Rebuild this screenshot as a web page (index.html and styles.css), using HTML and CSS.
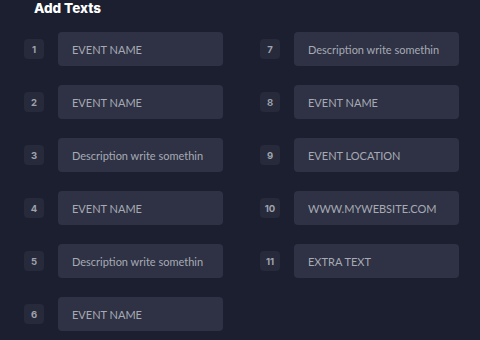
FILE: index.html
```html
<!DOCTYPE html>
<html lang="en">
  <head>
    <meta charset="UTF-8" />
    <meta name="viewport" content="width=device-width, initial-scale=1.0" />
    <title>Add Texts</title>
    <link rel="stylesheet" href="styles.css">
  </head>
  <body>
    <div class="panel">
      <h2 class="title">Add Texts</h2>

      <div class="fields">
        <div class="column">
          <label class="field"><span class="num">1</span><input type="text" placeholder="EVENT NAME" /></label>
          <label class="field"><span class="num">2</span><input type="text" placeholder="EVENT NAME" /></label>
          <label class="field"><span class="num">3</span><input type="text" placeholder="Description write somethin" /></label>
          <label class="field"><span class="num">4</span><input type="text" placeholder="EVENT NAME" /></label>
          <label class="field"><span class="num">5</span><input type="text" placeholder="Description write somethin" /></label>
          <label class="field"><span class="num">6</span><input type="text" placeholder="EVENT NAME" /></label>
        </div>
        <div class="column">
          <label class="field"><span class="num">7</span><input type="text" placeholder="Description write somethin" /></label>
          <label class="field"><span class="num">8</span><input type="text" placeholder="EVENT NAME" /></label>
          <label class="field"><span class="num">9</span><input type="text" placeholder="EVENT LOCATION" /></label>
          <label class="field"><span class="num">10</span><input type="text" placeholder="WWW.MYWEBSITE.COM" /></label>
          <label class="field"><span class="num">11</span><input type="text" placeholder="EXTRA TEXT" /></label>
        </div>
      </div>
    </div>
  </body>
</html>
```

FILE: styles.css
```css
html,
body {
  margin: 0;
  background: #1b1f30;
}
body {
  font-family: Inter, "Noto Sans", sans-serif;
  color: #a4a7b2;
}
.panel {
  padding: 0 21px 0 24px;
}
.title {
  margin: 0 0 16px 10px;
  font-size: 13.5px;
  line-height: 16px;
  font-weight: 800;
  color: #ffffff;
}
.fields {
  display: grid;
  grid-template-columns: 199px 199px;
  column-gap: 37px;
}
.column {
  display: flex;
  flex-direction: column;
  gap: 19px;
}
.field {
  display: flex;
  align-items: center;
  gap: 14px;
}
.num {
  width: 20px;
  height: 20px;
  flex: none;
  display: flex;
  align-items: center;
  justify-content: center;
  border-radius: 4px;
  background: #262a3b;
  font-size: 9.5px;
  font-weight: 700;
  color: #9fa2ad;
}
.field input {
  flex: 1;
  min-width: 0;
  height: 34px;
  box-sizing: border-box;
  padding: 0 14px;
  border: none;
  border-radius: 4px;
  background: #2e3244;
  font-family: Lato, "Noto Sans", sans-serif;
  font-size: 11px;
  color: #c4c6ce;
  outline: none;
}
.field input::placeholder {
  color: #a7aab4;
}
```
